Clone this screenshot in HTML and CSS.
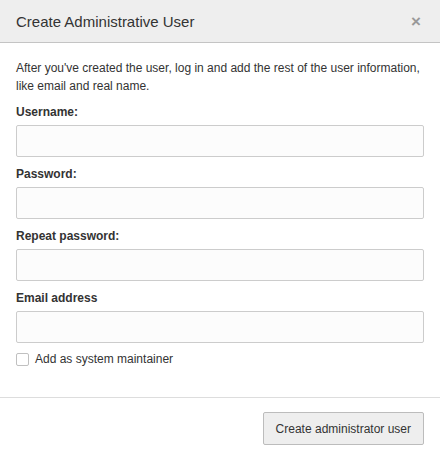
FILE: index.html
```html
<!DOCTYPE html>
<html>
<head>
<meta charset="utf-8">
<link rel="stylesheet" href="styles.css">
</head>
<body>
<div class="modal">
  <div class="modal-header">
    <h1 class="modal-title">Create Administrative User</h1>
    <span class="close">×</span>
  </div>
  <div class="modal-body">
    <p class="intro">After you've created the user, log in and add the rest of the user information, like email and real name.</p>
    <div class="field">
      <label class="label">Username:</label>
      <input class="input" type="text">
    </div>
    <div class="field">
      <label class="label">Password:</label>
      <input class="input" type="password">
    </div>
    <div class="field">
      <label class="label">Repeat password:</label>
      <input class="input" type="password">
    </div>
    <div class="field">
      <label class="label">Email address</label>
      <input class="input" type="text">
    </div>
    <label class="check-row"><span class="checkbox"></span><span>Add as system maintainer</span></label>
  </div>
  <div class="modal-footer">
    <button class="btn">Create administrator user</button>
  </div>
</div>
</body>
</html>
```
FILE: styles.css
```css
html, body {
  margin: 0;
  padding: 0;
  background: #fff;
}
body {
  font-family: "Liberation Sans", Arial, sans-serif;
  color: #333;
  font-size: 12px;
}
.modal {
  width: 440px;
  height: 459px;
  box-sizing: border-box;
  display: flex;
  flex-direction: column;
  border-radius: 0 0 4px 4px;
  overflow: hidden;
}
.modal-header {
  height: 42px;
  background: #eeeeee;
  border-bottom: 1px solid #c4c4c4;
  display: flex;
  align-items: center;
  justify-content: space-between;
  padding: 0 16px;
}
.modal-title {
  margin: 0;
  font-size: 15px;
  font-weight: normal;
  color: #333;
}
.close {
  font-size: 17px;
  font-weight: bold;
  color: #999;
  margin-right: 3px;
  line-height: 1;
}
.modal-body {
  padding: 16px 16px 0;
  flex: 1;
}
.intro {
  margin: 0 0 8px;
  line-height: 18px;
}
.field {
  display: flex;
  flex-direction: column;
  margin-bottom: 8px;
}
.label {
  font-weight: bold;
  line-height: 18px;
  margin-bottom: 4px;
}
.input {
  height: 32px;
  box-sizing: border-box;
  border: 1px solid #cccccc;
  border-radius: 2px;
  background: #fcfcfc;
  margin: 0;
}
.check-row {
  display: flex;
  align-items: center;
  gap: 6px;
  height: 18px;
  margin-top: -1px;
}
.checkbox {
  width: 11px;
  height: 11px;
  border: 1px solid #c0c0c0;
  border-radius: 2px;
  background: #fff;
}
.modal-footer {
  border-top: 1px solid #dddddd;
  padding: 14px 16px 14px;
  display: flex;
  justify-content: flex-end;
}
.btn {
  height: 33px;
  padding: 0 12px;
  font-family: "Liberation Sans", Arial, sans-serif;
  font-size: 12px;
  color: #333;
  background: #eeeeee;
  border: 1px solid #bcbcbc;
  border-radius: 2px;
}
```
